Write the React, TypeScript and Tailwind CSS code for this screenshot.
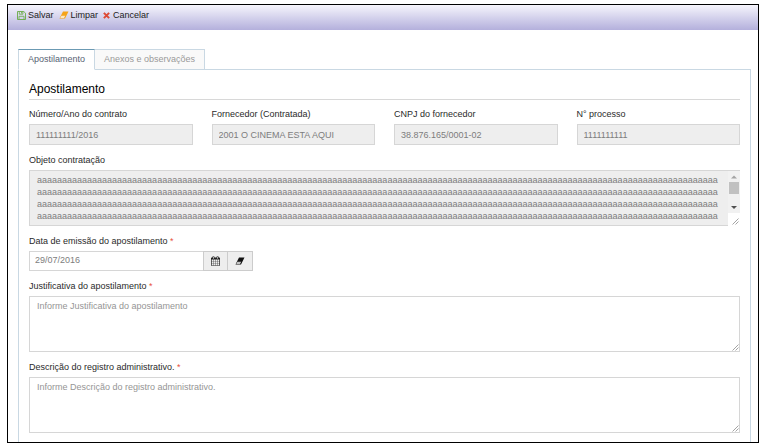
import { useId } from "react";
import type { ReactNode } from "react";

const fieldBox =
  "block w-full border border-[#d6d6d6] px-[6px] text-[#7d7d7d] outline-none placeholder:text-[#959595] placeholder:opacity-100";

const contractFields = [
  { label: "Número/Ano do contrato", value: "111111111/2016" },
  { label: "Fornecedor (Contratada)", value: "2001 O CINEMA ESTA AQUI" },
  { label: "CNPJ do fornecedor", value: "38.876.165/0001-02" },
  { label: "N° processo", value: "1111111111" },
];

const objectText = Array.from({ length: 4 }, () => "a".repeat(136)).join("\n");

function SaveIcon() {
  return (
    <svg viewBox="0 0 9 9" className="size-[9px]" fill="none" stroke="#69aa46" aria-hidden="true">
      <path d="M.5.5h6.3l1.7 1.7v6.3h-8z" strokeWidth="0.9" />
      <path d="M2.3.7v2.5h3.6V.7M2 8.3V5.3h5v3" strokeWidth="0.8" />
      <path d="M4.7 1v1.5" />
    </svg>
  );
}

function EraserIcon({ className }: { className: string }) {
  return (
    <svg viewBox="0 0 10 8" className={className} aria-hidden="true">
      <path d="M4 .5h5.500L6 7.500H.5z" fill="currentColor" />
      <path d="M2.400 4.700h3.900L5 6.900H1.200z" fill="#ffffff" fillOpacity="0.75" />
    </svg>
  );
}

function CancelIcon() {
  return (
    <svg viewBox="0 0 8 8" className="size-[7px]" stroke="#dd4a35" strokeWidth="2.3" aria-hidden="true">
      <path d="M1 1l6 6M7 1L1 7" />
    </svg>
  );
}

function CalendarIcon() {
  return (
    <svg viewBox="0 0 1664 1792" className="h-[10px] w-[9px]" fill="#222222" aria-hidden="true">
      <path
        fillRule="evenodd"
        d="M128 1664h288v-288H128v288zm352 0h320v-288H480v288zM128 1312h288V992H128v320zm352 0h320V992H480v320zM128 928h288V640H128v288zm736 736h320v-288H864v288zM480 928h320V640H480v288zm768 736h288v-288h-288v288zM864 1312h320V992H864v320zM512 448V160q0-32-32-32h-64q-32 0-32 32v288q0 32 32 32h64q32 0 32-32zm736 864h288V992h-288v320zM864 928h320V640H864v288zm384 0h288V640h-288v288zm32-480V160q0-32-32-32h-64q-32 0-32 32v288q0 32 32 32h64q32 0 32-32zm384-64v1280q0 52-38 90t-90 38H128q-52 0-90-38t-38-90V384q0-52 38-90t90-38h128v-96q0-66 47-113T416 0h64q66 0 113 47t47 113v96h384v-96q0-66 47-113t113-47h64q66 0 113 47t47 113v96h128q52 0 90 38t38 90z"
      />
    </svg>
  );
}

function Grip() {
  return (
    <svg viewBox="0 0 7 7" className="size-[7px]" stroke="#9a9a9a" strokeWidth="0.9" aria-hidden="true">
      <path d="M.5 6.500L6.500.5M3.500 6.500l3-3" />
    </svg>
  );
}

function Label({ htmlFor, required, children }: { htmlFor: string; required?: boolean; children: ReactNode }) {
  return (
    <label htmlFor={htmlFor} className="mb-1 block leading-[12px] text-[#2a2a2a]">
      {children}
      {required && <span className="text-[#e8503f]"> *</span>}
    </label>
  );
}

function ReadOnlyField({ label, value }: { label: string; value: string }) {
  const id = useId();
  return (
    <div className="min-w-0">
      <Label htmlFor={id}>{label}</Label>
      <input id={id} readOnly value={value} className={`${fieldBox} h-[21px] bg-[#eeeeee]`} />
    </div>
  );
}

function NoteField({ label, placeholder }: { label: string; placeholder: string }) {
  const id = useId();
  return (
    <div>
      <Label htmlFor={id} required>
        {label}
      </Label>
      <div className="relative">
        <textarea
          id={id}
          placeholder={placeholder}
          className={`${fieldBox} h-14 resize-none overflow-hidden bg-white px-[7px] py-[3px] leading-[12px]`}
        />
        <span className="pointer-events-none absolute right-px bottom-px">
          <Grip />
        </span>
      </div>
    </div>
  );
}

export default function App() {
  return (
    <div className="bg-white pt-1 pr-[5px] pb-1 pl-[7px] font-['Liberation_Sans',Arial,sans-serif] text-[9px]">
      <div className="border border-black">
        <header className="flex h-[25px] items-start gap-[5px] bg-linear-to-b from-[#f6f5fc] to-[#b4b0dc] px-[9px] pt-1 leading-[12px] text-[#1c1c1c]">
          <button type="button" className="flex items-center gap-[2px]">
            <SaveIcon />
            Salvar
          </button>
          <button type="button" className="flex items-center gap-[2px]">
            <EraserIcon className="h-2 w-[10px] text-[#f5a31a]" />
            Limpar
          </button>
          <button type="button" className="flex items-center gap-[3px]">
            <CancelIcon />
            Cancelar
          </button>
        </header>

        <main className="pt-[19px] pr-[7px] pl-[10px]">
          <div role="tablist" className="relative z-10 -mb-px flex h-[21px]">
            <button
              type="button"
              role="tab"
              aria-selected="true"
              className="border border-[#c9d8e3] border-t-[#6b9ab3] border-b-white bg-white px-[9px] text-[#576373]"
            >
              Apostilamento
            </button>
            <button
              type="button"
              role="tab"
              aria-selected="false"
              className="border border-l-0 border-[#c9d8e3] bg-[#f9f9f9] px-[9px] text-[#999999]"
            >
              Anexos e observações
            </button>
          </div>

          <section role="tabpanel" className="border border-b-0 border-[#c9d8e3] px-[10px] pt-3 pb-[9px]">
            <h1 className="mb-2 border-b border-[#d8d8d8] pb-[2px] text-[12px] leading-[15px] text-black">
              Apostilamento
            </h1>
            <form className="flex flex-col gap-[9px]">
              <div className="grid grid-cols-4 gap-[19px]">
                {contractFields.map((f) => (
                  <ReadOnlyField key={f.label} label={f.label} value={f.value} />
                ))}
              </div>

              <div>
                <Label htmlFor="objeto">Objeto contratação</Label>
                <div className="relative">
                  <textarea
                    id="objeto"
                    readOnly
                    value={objectText}
                    className={`${fieldBox} h-14 resize-none overflow-hidden bg-[#eeeeee] py-[3px] pr-4 pl-[7px] leading-[12px] whitespace-pre`}
                  />
                  <div
                    aria-hidden="true"
                    className="absolute inset-y-0 right-0 flex w-3 flex-col items-center border-t border-[#d6d6d6] bg-[#f1f1f1]"
                  >
                    <svg viewBox="0 0 12 11" className="h-[11px] w-3 shrink-0" fill="#a3a3a3">
                      <path d="M6 4.500l3 3H3z" />
                    </svg>
                    <div className="h-3 w-[10px] bg-[#c1c1c1]" />
                    <svg viewBox="0 0 12 19" className="h-[19px] w-3 shrink-0" fill="#505050">
                      <path d="M3 12h6l-3 3z" />
                    </svg>
                    <div className="flex w-3 grow items-end justify-end bg-white p-px">
                      <Grip />
                    </div>
                  </div>
                </div>
              </div>

              <div>
                <Label htmlFor="data" required>
                  Data de emissão do apostilamento
                </Label>
                <div className="flex h-5 w-56">
                  <input
                    id="data"
                    defaultValue="29/07/2016"
                    className="min-w-0 grow border border-r-0 border-[#d6d6d6] px-[5px] text-[#7d7d7d] outline-none"
                  />
                  <button
                    type="button"
                    aria-label="Abrir calendário"
                    className="flex w-[25px] items-center justify-center border border-[#cccccc] bg-[#eeeeee]"
                  >
                    <CalendarIcon />
                  </button>
                  <button
                    type="button"
                    aria-label="Limpar data"
                    className="flex w-[25px] items-center justify-center border border-l-0 border-[#cccccc] bg-[#eeeeee]"
                  >
                    <EraserIcon className="h-2 w-[10px] text-[#111111]" />
                  </button>
                </div>
              </div>

              <NoteField label="Justificativa do apostilamento" placeholder="Informe Justificativa do apostilamento" />
              <NoteField
                label="Descrição do registro administrativo."
                placeholder="Informe Descrição do registro administrativo."
              />
            </form>
          </section>
        </main>
      </div>
    </div>
  );
}
